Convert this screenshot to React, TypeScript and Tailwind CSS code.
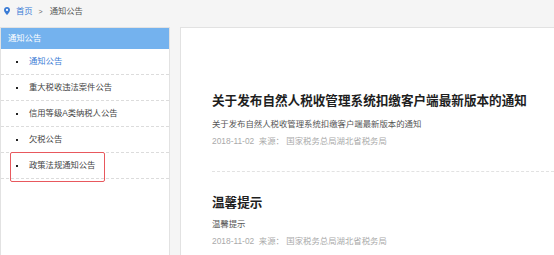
import React from 'react';

const menu = ['通知公告', '重大税收违法案件公告', '信用等级A类纳税人公告', '欠税公告', '政策法规通知公告'];

const notices = [
  {
    title: '关于发布自然人税收管理系统扣缴客户端最新版本的通知',
    summary: '关于发布自然人税收管理系统扣缴客户端最新版本的通知',
  },
  { title: '温馨提示', summary: '温馨提示' },
];

const PinIcon: React.FC = () => (
  <svg width="6" height="8" viewBox="0 0 6 8" className="shrink-0">
    <path d="M3 0C1.3 0 0 1.3 0 2.9 0 5 3 8 3 8s3-3 3-5.1C6 1.3 4.7 0 3 0z" fill="#3a7bd5" />
    <circle cx="3" cy="2.9" r="1.1" fill="#fff" />
  </svg>
);

const App: React.FC = () => {
  return (
    <div
      className="relative w-[554px] h-[255px] overflow-hidden bg-[#f5f5f5] flex flex-col"
      style={{ fontFamily: '"Liberation Sans", "Noto Sans CJK SC", sans-serif' }}
    >
      {/* breadcrumb */}
      <div className="h-[27px] shrink-0 flex items-center pl-[4px] pb-[5px] text-[8.3px] leading-none">
        <PinIcon />
        <span className="ml-[6px] text-[#3a7bd5]">首页</span>
        <span className="ml-[6px] text-[#666] text-[7px]">&gt;</span>
        <span className="ml-[7px] text-[#555]">通知公告</span>
      </div>

      <div className="flex flex-1 gap-[10px] min-h-0">
        {/* sidebar */}
        <div className="w-[170px] shrink-0 bg-white border-x border-t border-[#e2e2e2]">
          <div className="h-[21px] bg-[#74b2ee] text-white text-[8.3px] flex items-center pl-[7px]">通知公告</div>
          {menu.map((item, i) => (
            <div
              key={item}
              className="h-[26px] border-b border-dashed border-[#dcdcdc] flex items-center pl-[15px] text-[8.3px]"
            >
              <span className="w-[2px] h-[2px] bg-[#222] shrink-0" />
              <span className={i === 0 ? 'ml-[11px] text-[#3a7bd5]' : 'ml-[11px] text-[#444]'}>{item}</span>
            </div>
          ))}
        </div>

        {/* notice list */}
        <div className="flex-1 bg-white border-l border-t border-[#e2e2e2] pl-[31px] pt-[65px]">
          {notices.map((n, i) => (
            <div key={n.title} className={i === 0 ? 'border-b border-dashed border-[#e2e2e2] pb-[24px]' : 'pt-[23px]'}>
              <div className="text-[12.6px] leading-[16px] font-bold text-[#1e1e1e] whitespace-nowrap">{n.title}</div>
              <div
                className={
                  i === 0
                    ? 'mt-[9px] text-[8.4px] leading-[12px] text-[#555] whitespace-nowrap'
                    : 'mt-[7px] text-[8.4px] leading-[12px] text-[#555] whitespace-nowrap'
                }
              >
                {n.summary}
              </div>
              <div className="mt-[5px] text-[8.4px] leading-[12px] text-[#aaa] whitespace-nowrap">
                2018-11-02&nbsp; 来源： 国家税务总局湖北省税务局
              </div>
            </div>
          ))}
        </div>
      </div>

      {/* annotation box */}
      <div className="absolute left-[10px] top-[152px] w-[95px] h-[30px] border border-[#e8585d] rounded-[2px]" />
    </div>
  );
};

export default App;
